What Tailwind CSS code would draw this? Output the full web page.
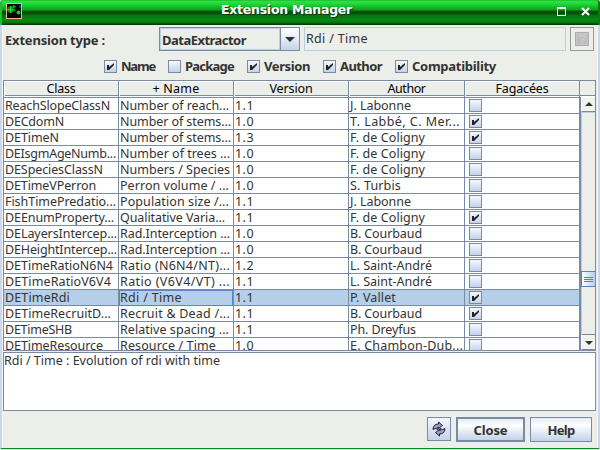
<!DOCTYPE html>
<html lang="en">
<head>
<meta charset="utf-8">
<title>Extension Manager</title>
<script src="https://cdn.jsdelivr.net/npm/@tailwindcss/browser@4"></script>
</head>
<body class="w-[600px] h-[450px] overflow-hidden bg-[#cbd8ea] font-['Noto_Sans','DejaVu_Sans',sans-serif] text-[12.5px] text-[#333333]">
<div class="w-[600px] h-[450px] flex flex-col">
  <header class="relative h-[25px] shrink-0 rounded-t-[3px] border-l-2 border-r-2 border-l-[#18c030] border-r-[#067a0e] bg-[linear-gradient(180deg,#0fae20_0px,#2ee245_1px,#20d83a_4px,#10b020_8px,#10a01c_10px,#075c0d_11px,#044608_13px,#067010_15px,#068a12_20px,#06720d_23px,#033c06_24px)] flex items-start pl-1">
    <svg class="mt-[3px] shrink-0" width="16" height="16" viewBox="0 0 16 16"><rect width="16" height="16" fill="#f0b888"/><rect x="1" y="1" width="14" height="14" fill="#010801"/><circle cx="4.500" cy="6.500" r="3.300" fill="#0c7814"/><path d="M4 3h1.500v7H4zM1.500 6h6.500v1.500H1.500z" fill="#18d820"/><circle cx="8" cy="3.500" r="1.500" fill="#0fa81c"/><circle cx="12.500" cy="9.500" r="1.900" fill="#18c828"/><circle cx="8.500" cy="7" r="1.200" fill="#0a8a10"/><rect x="13" y="2" width="2" height="3" fill="#1020f0"/></svg>
    <h1 class="ml-[199px] mt-[2px] leading-4 text-[12.5px] font-bold text-white font-['DejaVu_Sans'] whitespace-nowrap [text-shadow:1px_1px_0_#063d08]"><span data-w="131">Extension Manager</span></h1>
    <svg class="absolute left-[555px] top-[7px]" width="36" height="10" viewBox="0 0 36 10" fill="none" stroke="#fff" shape-rendering="crispEdges"><path d="M0.500 0v9M8.500 0v9M0 8.500h9"/><path d="M0 1h9" stroke-width="2"/><path d="M25 1l7 7M32 1l-7 7" stroke-width="2.200" shape-rendering="auto"/></svg>
  </header>

  <main class="h-[423px] shrink-0 mx-[2px] pl-[1px] pr-[2px] bg-[#eceee9] border-x border-[#f4f7fa] flex flex-col">
    <div class="flex h-[26px] pt-[2px] pl-[1px] text-[13px] font-bold">
      <span class="w-[155px] leading-[26px] shrink-0 whitespace-nowrap"><span data-w="100">Extension type :</span></span>
      <div class="w-[141px] h-6 flex border border-[#7a8aa5] -ml-[1px] shrink-0">
        <div class="w-[120px] border border-[#b8cfe5] pl-px leading-[22px]"><span data-w="84">DataExtractor</span></div>
        <div class="w-[19px] border-l border-[#7a8aa5] bg-linear-to-b from-white via-[#e4ebf5] to-[#c2d3e8] flex justify-center pt-[9px]"><svg width="10" height="5"><path d="M0 0h10L5 5z" fill="#333"/></svg></div>
      </div>
      <div class="ml-[4px] w-[262px] h-6 border border-[#b8cfe5] pl-px leading-[21px] font-normal text-[12.5px] shrink-0"><span data-w="62">Rdi / Time</span></div>
      <div class="ml-[4px] w-6 h-6 border border-[#999999] p-1 shrink-0"><svg width="14" height="14"><rect x=".5" y=".5" width="13" height="13" fill="#c6c6c6" stroke="#adadad"/><rect x="2" y="2" width="10" height="10" fill="#bdbdbd"/><path d="M4.500 5V3.500h5V6L7 8v1.500M7 10v2" fill="none" stroke="#cdcdcd" stroke-width="1.300"/></svg></div>
    </div>

    <div id="filters" class="flex h-[29px] pt-[9px] pl-[100px] font-bold text-[13px] leading-[13px] whitespace-nowrap"></div>

    <section class="relative h-[271px] w-[593px] -ml-[1px] shrink-0 border border-[#7a8aa5] bg-white overflow-hidden">
      <div class="h-[15px] grid grid-cols-[115px_115px_115px_116px_115px_15px] bg-[#eceee9] text-black text-center leading-[16px] border-b border-[#7a8aa5]">
        <div class="border-r border-[#7a8aa5] shadow-[inset_1px_1px_#fff]"><span data-w="29">Class</span></div>
        <div class="border-r border-[#7a8aa5] shadow-[inset_1px_1px_#fff]"><span data-w="47">+ Name</span></div>
        <div class="border-r border-[#7a8aa5] shadow-[inset_1px_1px_#fff]"><span data-w="43">Version</span></div>
        <div class="border-r border-[#7a8aa5] shadow-[inset_1px_1px_#fff]"><span data-w="38">Author</span></div>
        <div class="border-r border-[#7a8aa5] shadow-[inset_1px_1px_#fff]"><span data-w="53">Fagacées</span></div>
        <div></div>
      </div>
      <div class="h-px bg-white"></div>
      <div class="flex">
        <div id="rows" class="w-[575px] border-t border-[#7a8aa5] shrink-0"></div>
        <div class="w-[16px] h-[253px] shrink-0 bg-[#eceee9] border-l-2 border-[#7a8aa5] flex flex-col">
          <div class="h-[15px] shrink-0 bg-[#f1f3ef] border-t border-l border-b border-t-white border-l-white border-b-[#7a8aa5] flex justify-center pt-[4px]"><svg width="8" height="4"><path d="M0 4h8L4 0z" fill="#333"/></svg></div>
          <div class="h-[159px] shrink-0 border-l border-t border-[#b8cfe5]"></div>
          <div class="h-[16px] shrink-0 border border-r-0 border-[#5a7fc0] bg-linear-to-r from-white to-[#b9cde6] flex flex-col justify-center gap-px pl-[2px]">
            <i class="w-[9px] h-px bg-[#5a7fc0]"></i><i class="w-[9px] h-px bg-[#5a7fc0]"></i><i class="w-[9px] h-px bg-[#5a7fc0]"></i>
          </div>
          <div class="h-[47px] shrink-0 border-l border-[#b8cfe5]"></div>
          <div class="h-[16px] shrink-0 bg-[#f1f3ef] border border-r-0 border-t-[#7a8aa5] border-l-white border-b-[#7a8aa5] flex justify-center pt-[6px]"><svg width="8" height="4"><path d="M0 0h8L4 4z" fill="#333"/></svg></div>
        </div>
      </div>
    </section>

    <div class="mt-px h-[59px] w-[593px] -ml-[1px] shrink-0 border border-[#7a8aa5] bg-white leading-[16px]"><span data-w="216">Rdi / Time : Evolution of rdi with time</span></div>

    <footer class="flex pt-[6px] pl-[423px] font-bold text-[13px] text-center leading-[22px]">
      <div class="w-6 h-6 border border-[#7a8aa5] bg-linear-to-b from-[#f4f7fb] to-[#c2d3e8] flex items-center justify-center">
        <svg width="14" height="16" viewBox="0 0 14 16" fill="#9a9ad0" stroke="#111" stroke-width=".9" stroke-linejoin="round"><path d="M6.500 1v2C3 3 1 5 1 8.500L3.500 7.500l2.500 1V6l.5 1.500L10.500 4.500z"/><path d="M7.500 15v-2c3.500 0 5.500-2 5.500-5.500L10.500 8.500 8 7.500V10l-.5-1.500L3.500 11.500z"/></svg>
      </div>
      <div class="ml-[5px] w-[69px] h-[25px] border-2 border-[#7a8aa5] bg-linear-to-b from-[#e4ecf5] via-white via-30% to-[#c2d3e8]"><span data-w="34">Close</span></div>
      <div class="ml-[5px] w-[62px] h-[25px] border border-[#7a8aa5] bg-linear-to-b from-[#e4ecf5] via-white via-30% to-[#c2d3e8] leading-6"><span data-w="27">Help</span></div>
    </footer>
  </main>
  <div class="h-px mx-px bg-[#0a8a1c] shrink-0"></div>
  <div class="h-px bg-[#d4e6dc] shrink-0"></div>
</div>
<script>
const box = (on, extra) => `<span class="block shrink-0 w-[13px] h-[13px] border border-[#7a8aa5] bg-linear-to-b from-[#f6f9fc] to-[#c2d3e8] ${extra}">${on ? '<svg width="11" height="11"><path d="M2 4h2v2l5-4v2L4 9H2z" fill="#222"/></svg>' : ''}</span>`;
const filters = [["Name",1,34,"w-[64px]"],["Package",0,49,"w-[79px]"],["Version",1,46,"w-[76px]"],["Author",1,42,"w-[72px]"],["Compatibility",1,84,"w-[110px]"]];
document.getElementById('filters').innerHTML = filters.map(([t,on,w,c]) =>
  `<label class="flex shrink-0 gap-[4px] ${c}">${box(on,'')}<span><span data-w="${w}">${t}</span></span></label>`).join('');
const rows = [
 ["ReachSlopeClassN",105,"Number of reach...",109,"1.1","J. Labonne",61,0],
 ["DECdomN",59,"Number of stems...",111,"1.0","T. Labbé, C. Mer...",110,1],
 ["DETimeN",54,"Number of stems...",111,"1.3","F. de Coligny",75,1],
 ["DEIsgmAgeNumb...",111,"Number of trees ...",110,"1.0","F. de Coligny",75,0],
 ["DESpeciesClassN",98,"Numbers / Species",110,"1.0","F. de Coligny",75,0],
 ["DETimeVPerron",91,"Perron volume / ...",109,"1.0","S. Turbis",51,0],
 ["FishTimePredatio...",111,"Population size /...",109,"1.1","J. Labonne",61,0],
 ["DEEnumProperty...",109,"Qualitative Varia...",105,"1.1","F. de Coligny",75,1],
 ["DELayersIntercep...",112,"Rad.Interception ...",110,"1.0","B. Courbaud",72,0],
 ["DEHeightIntercep...",112,"Rad.Interception ...",110,"1.0","B. Courbaud",72,0],
 ["DETimeRatioN6N4",108,"Ratio (N6N4/NT)...",110,"1.2","L. Saint-André",82,0],
 ["DETimeRatioV6V4",106,"Ratio (V6V4/VT) ...",110,"1.1","L. Saint-André",82,0],
 ["DETimeRdi",65,"Rdi / Time",62,"1.1","P. Vallet",46,1],
 ["DETimeRecruitD...",106,"Recruit & Dead /...",110,"1.1","B. Courbaud",72,1],
 ["DETimeSHB",67,"Relative spacing ...",109,"1.1","Ph. Dreyfus",66,0],
 ["DETimeResource",98,"Resource / Time",96,"1.0","E. Chambon-Dub...",113,0]];
document.getElementById('rows').innerHTML = rows.map((r,i) => {
  const sel = i === 12;
  const cell = (t,w,c='pl-px') => `<div class="border-r border-[#7a8aa5] whitespace-nowrap ${c}"><span data-w="${w}">${t.replace('&','&amp;')}</span></div>`;
  return `<div class="grid grid-cols-[115px_115px_115px_116px_114px] h-4 leading-[16px] border-b border-[#7a8aa5] ${sel?'bg-[#b6cfe8]':''}">` +
   cell(r[0],r[1]) + cell(r[2],r[3],sel?'pl-px shadow-[inset_0_0_0_1px_#5a85c8]':'pl-px') + cell(r[4],19,'pl-px') + cell(r[5],r[6]) + `<div>${box(r[7],'mt-px ml-[4px]')}</div></div>`;
}).join('');

// Tracks every label out to its own width once styles and fonts are in place.
function fit() {
  document.querySelectorAll('[data-w]').forEach(e => {
    e.style.letterSpacing = '0px';
    e.style.whiteSpace = 'nowrap';
    const d = +e.dataset.w - e.getBoundingClientRect().width;
    e.style.letterSpacing = d / e.textContent.length + 'px';
  });
}
fit();
window.addEventListener('load', () => { fit(); document.fonts.ready.then(fit); });
</script>
</body>
</html>
